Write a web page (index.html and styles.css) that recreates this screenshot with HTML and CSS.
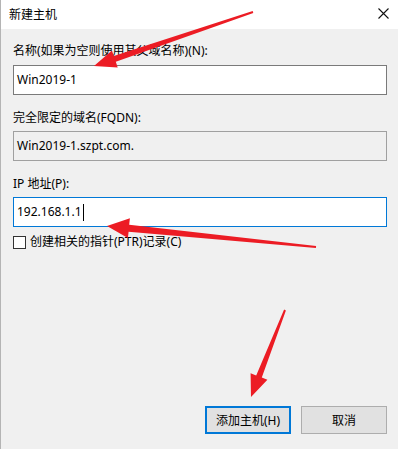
FILE: index.html
```html
<!DOCTYPE html>
<html lang="zh-CN">
<head>
  <meta charset="UTF-8">
  <title>新建主机</title>
  <link rel="stylesheet" href="styles.css">
</head>
<body>
  <div class="dialog">
    <div class="titlebar">
      <span class="title">新建主机</span>
      <button class="close" aria-label="关闭">
        <svg width="11" height="11" viewBox="0 0 11 11"><path d="M0.5 0.5 L10.5 10.5 M10.5 0.5 L0.5 10.5" stroke="#111" stroke-width="1.1" fill="none"/></svg>
      </button>
    </div>

    <div class="content">
      <label class="field-label">名称(如果为空则使用其父域名称)(N):</label>
      <div class="textbox">Win2019-1</div>

      <label class="field-label gap">完全限定的域名(FQDN):</label>
      <div class="textbox readonly">Win2019-1.szpt.com.</div>

      <label class="field-label gap">IP 地址(P):</label>
      <div class="textbox focused">192.168.1.1<span class="caret"></span></div>

      <div class="check-row">
        <span class="checkbox"></span>
        <span>创建相关的指针(PTR)记录(C)</span>
      </div>

      <div class="buttons">
        <button class="btn primary">添加主机(H)</button>
        <button class="btn">取消</button>
      </div>
    </div>

    <!-- annotation arrows drawn over the dialog -->
    <svg class="arrows" width="398" height="449" viewBox="0 0 398 449">
      <polygon points="252.7,11.1 113.8,56.1 111.9,50.4 94,66 117.7,67.4 115.8,61.7 253.3,12.9"/>
      <polygon points="316.1,246 129.2,224.7 129.9,218.3 107,226 127.9,238.1 128.6,231.7 315.9,248"/>
      <polygon points="285.9,310.4 261.8,377.6 267.4,379.8 251,397 250.6,373.2 256.2,375.4 284.1,309.6"/>
    </svg>
  </div>
</body>
</html>
```

FILE: styles.css
```css
:root {
  --bg: #f0f0f0;
  --text: #000;
  --border: #7a7a7a;
  --accent: #0078d7;
  --arrow: #ec1c24;
}
body {
  margin: 0;
  font-family: "Noto Sans", "Noto Sans CJK SC", sans-serif;
  font-size: 12px;
  color: var(--text);
}
.dialog {
  position: relative;
  width: 398px;
  height: 449px;
  display: flex;
  flex-direction: column;
  background: var(--bg);
  border-left: 1px solid #b4b4b4;
  box-sizing: border-box;
}
.titlebar {
  height: 29px;
  background: #fff;
  display: flex;
  align-items: center;
  justify-content: space-between;
  padding: 0 9px 0 8px;
  flex-shrink: 0;
}
.title {
  line-height: 16px;
  margin-top: 1px;
}
.close {
  background: none;
  border: none;
  padding: 0;
  width: 11px;
  height: 11px;
  margin-top: -2px;
  display: flex;
}
.content {
  flex: 1;
  display: flex;
  flex-direction: column;
  padding: 14px 11px 15px 12px;
}
.field-label {
  display: block;
  line-height: 16px;
  height: 16px;
}
.field-label.gap {
  margin-top: 15px;
}
.textbox {
  margin-top: 6px;
  height: 30px;
  box-sizing: border-box;
  border: 1px solid var(--border);
  background: #fff;
  padding: 0 3px;
  line-height: 28px;
  display: flex;
  align-items: center;
}
.textbox.readonly {
  background: var(--bg);
  border-color: #a0a0a0;
  margin-top: 5px;
}
.textbox.focused {
  border-color: var(--accent);
  margin-top: 5px;
}
.caret {
  display: inline-block;
  width: 1px;
  height: 17px;
  background: #000;
  margin-left: 1px;
}
.check-row {
  margin-top: 7px;
  display: flex;
  align-items: center;
  gap: 4px;
  line-height: 16px;
}
.checkbox {
  width: 13px;
  height: 13px;
  box-sizing: border-box;
  border: 1px solid #333;
  background: #fff;
}
.buttons {
  margin-top: auto;
  display: flex;
  justify-content: flex-end;
  gap: 10px;
}
.btn {
  width: 86px;
  height: 28px;
  box-sizing: border-box;
  background: #e1e1e1;
  border: 1px solid #adadad;
  font: inherit;
  color: var(--text);
  padding: 0;
}
.btn.primary {
  border: 2px solid var(--accent);
}
.arrows {
  position: absolute;
  left: -1px;
  top: 0;
  pointer-events: none;
}
.arrows polygon {
  fill: var(--arrow);
}
```
